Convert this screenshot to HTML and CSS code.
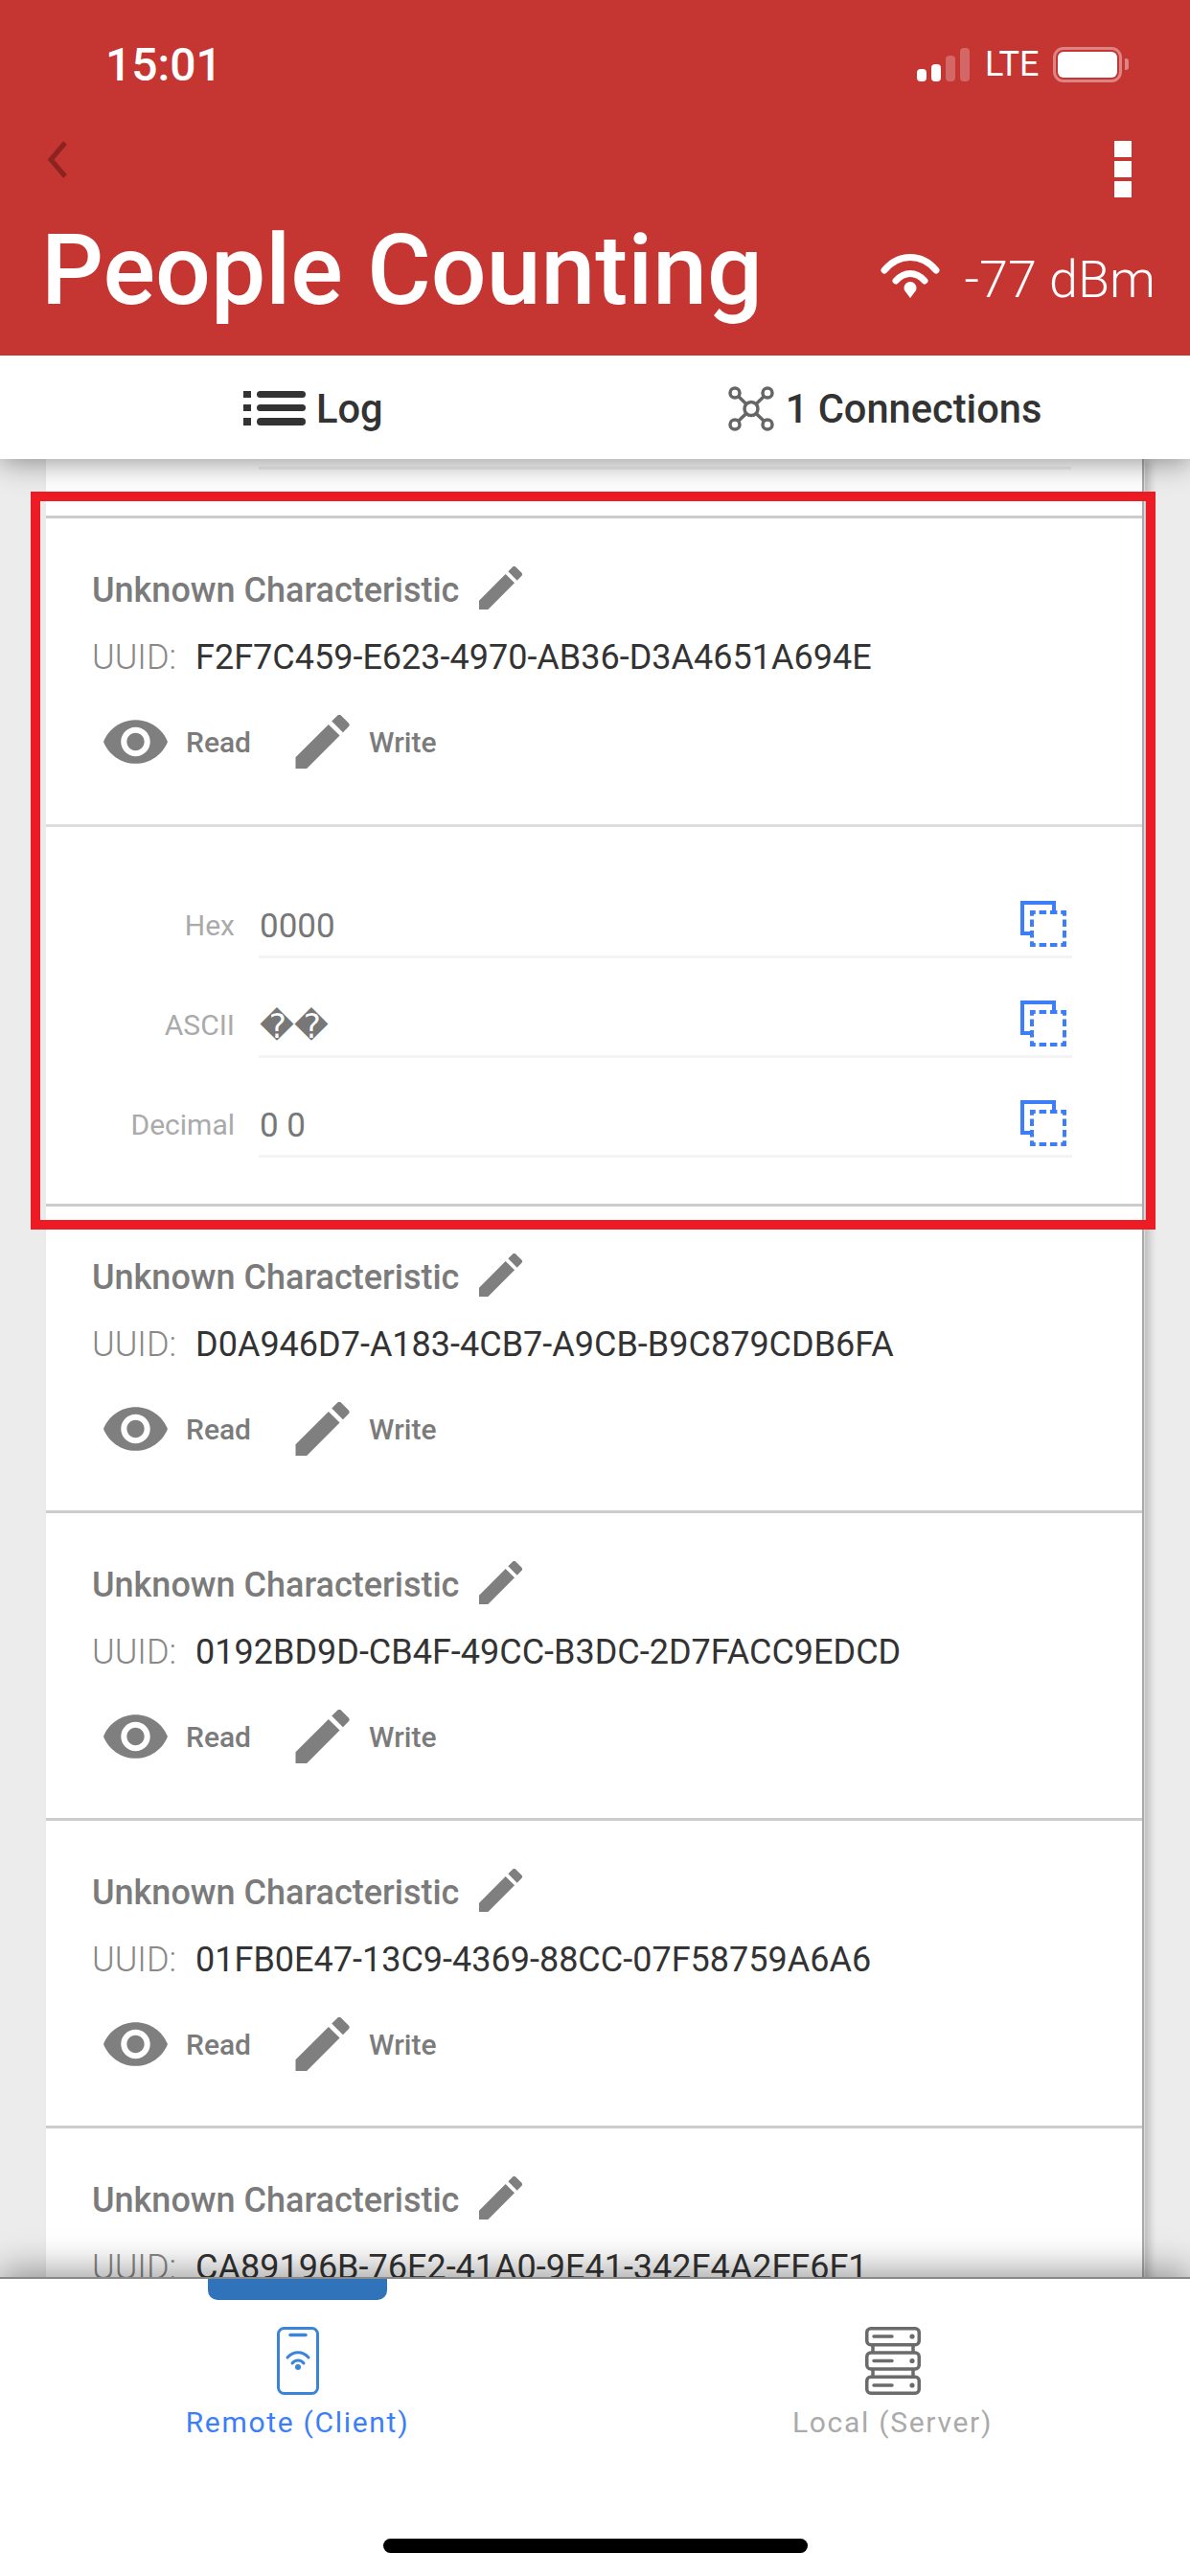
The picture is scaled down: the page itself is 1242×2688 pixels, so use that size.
FILE: index.html
```html
<!DOCTYPE html>
<html lang="en">
<head>
    <meta charset="UTF-8">
    <title>People Counting</title>
    <link rel="stylesheet" href="styles.css">
</head>
<body>
    <svg class="icon-defs" width="0" height="0">
        <defs>
            <symbol id="pencil" viewBox="3 3 18 18">
                <path d="M3 17.25V21h3.75L17.81 9.94l-3.75-3.75L3 17.25zM20.71 7.04a1 1 0 0 0 0-1.41l-2.34-2.34a1 1 0 0 0-1.41 0l-1.83 1.83 3.75 3.75 1.83-1.83z"/>
            </symbol>
            <symbol id="eye" viewBox="1 4.5 22 15">
                <path d="M12 4.5C7 4.5 2.73 7.61 1 12c1.73 4.39 6 7.5 11 7.5s9.27-3.11 11-7.5c-1.73-4.39-6-7.5-11-7.5zM12 17c-2.76 0-5-2.24-5-5s2.24-5 5-5 5 2.24 5 5-2.24 5-5 5zm0-8c-1.66 0-3 1.34-3 3s1.34 3 3 3 3-1.34 3-3-1.34-3-3-3z"/>
            </symbol>
            <symbol id="copy" viewBox="0 0 48 48">
                <path d="M14 34H2V2H35V12" fill="none" stroke="#3b7ef7" stroke-width="4"/>
                <rect x="12" y="12" width="34" height="34" fill="none" stroke="#3b7ef7" stroke-width="4" stroke-dasharray="7.5 3.83" stroke-dashoffset="3.75"/>
            </symbol>
        </defs>
    </svg>

    <header class="app-header">
        <div class="status-bar">
            <span class="status-time">15:01</span>
            <div class="status-right">
                <div class="signal">
                    <i class="bar bar-1"></i>
                    <i class="bar bar-2"></i>
                    <i class="bar bar-3 bar-off"></i>
                    <i class="bar bar-4 bar-off"></i>
                </div>
                <span class="status-lte">LTE</span>
                <div class="battery"><i class="battery-level"></i></div>
                <i class="battery-nub"></i>
            </div>
        </div>
        <div class="toolbar">
            <svg class="back-icon" viewBox="0 0 23 39"><path d="M19 2L4 19.5 19 37" fill="none" stroke="#8c2320" stroke-width="5"/></svg>
            <div class="more-icon"><i></i><i></i><i></i></div>
        </div>
        <div class="title-row">
            <h1 class="page-title">People Counting</h1>
            <div class="rssi">
                <svg class="wifi-icon" viewBox="0 0 62 47">
                    <path d="M4 18C19 0 43 0 58 18M16 29C25 19 37 19 46 29" fill="none" stroke="#fff" stroke-width="7" stroke-linecap="round"/>
                    <path d="M31 47l-6-8a6.5 6.5 0 1 1 12 0z" fill="#fff"/>
                </svg>
                <span class="rssi-value">-77 dBm</span>
            </div>
        </div>
    </header>

    <nav class="top-nav">
        <a class="nav-item nav-log">
            <svg class="log-icon" viewBox="0 0 66 36">
                <rect x="0" y="0" width="8" height="7"/><rect x="0" y="14" width="8" height="7"/><rect x="0" y="28" width="8" height="8"/>
                <rect x="14" y="0" width="51" height="7" rx="3.5"/><rect x="14" y="14" width="51" height="7" rx="3.5"/><rect x="14" y="28" width="51" height="8" rx="4"/>
            </svg>
            Log
        </a>
        <a class="nav-item nav-conn">
            <svg class="conn-icon" viewBox="0 0 48 47">
                <path d="M10 10L38 37M38 10L10 37" stroke="#666" stroke-width="3.5"/>
                <g fill="#fff" stroke="#666" stroke-width="3.5">
                    <circle cx="24" cy="23.5" r="7"/>
                    <circle cx="7" cy="7" r="5"/><circle cx="41" cy="7" r="5"/>
                    <circle cx="7" cy="40" r="5"/><circle cx="41" cy="40" r="5"/>
                </g>
            </svg>
            1 Connections
        </a>
    </nav>

    <main class="content">
        <div class="char-list">
            <div class="prev-stub"><i></i></div>

            <section class="char-card char-open">
                <div class="char-info">
                    <div class="char-title">Unknown Characteristic <svg class="pencil-small"><use href="#pencil"/></svg></div>
                    <div class="char-uuid"><span class="uuid-label">UUID:</span> F2F7C459-E623-4970-AB36-D3A4651A694E</div>
                    <div class="char-actions">
                        <span class="action action-read"><svg class="eye-icon"><use href="#eye"/></svg>Read</span>
                        <span class="action action-write"><svg class="pencil-big"><use href="#pencil"/></svg>Write</span>
                    </div>
                </div>
                <div class="char-values">
                    <div class="value-row">
                        <span class="value-label">Hex</span>
                        <div class="value-field"><span>0000</span><svg class="copy-icon"><use href="#copy"/></svg></div>
                    </div>
                    <div class="value-row">
                        <span class="value-label">ASCII</span>
                        <div class="value-field"><span class="value-ascii">��</span><svg class="copy-icon"><use href="#copy"/></svg></div>
                    </div>
                    <div class="value-row">
                        <span class="value-label">Decimal</span>
                        <div class="value-field"><span>0 0</span><svg class="copy-icon"><use href="#copy"/></svg></div>
                    </div>
                </div>
            </section>

            <section class="char-card">
                <div class="char-info">
                    <div class="char-title">Unknown Characteristic <svg class="pencil-small"><use href="#pencil"/></svg></div>
                    <div class="char-uuid"><span class="uuid-label">UUID:</span> D0A946D7-A183-4CB7-A9CB-B9C879CDB6FA</div>
                    <div class="char-actions">
                        <span class="action action-read"><svg class="eye-icon"><use href="#eye"/></svg>Read</span>
                        <span class="action action-write"><svg class="pencil-big"><use href="#pencil"/></svg>Write</span>
                    </div>
                </div>
            </section>

            <section class="char-card">
                <div class="char-info">
                    <div class="char-title">Unknown Characteristic <svg class="pencil-small"><use href="#pencil"/></svg></div>
                    <div class="char-uuid"><span class="uuid-label">UUID:</span> 0192BD9D-CB4F-49CC-B3DC-2D7FACC9EDCD</div>
                    <div class="char-actions">
                        <span class="action action-read"><svg class="eye-icon"><use href="#eye"/></svg>Read</span>
                        <span class="action action-write"><svg class="pencil-big"><use href="#pencil"/></svg>Write</span>
                    </div>
                </div>
            </section>

            <section class="char-card">
                <div class="char-info">
                    <div class="char-title">Unknown Characteristic <svg class="pencil-small"><use href="#pencil"/></svg></div>
                    <div class="char-uuid"><span class="uuid-label">UUID:</span> 01FB0E47-13C9-4369-88CC-07F58759A6A6</div>
                    <div class="char-actions">
                        <span class="action action-read"><svg class="eye-icon"><use href="#eye"/></svg>Read</span>
                        <span class="action action-write"><svg class="pencil-big"><use href="#pencil"/></svg>Write</span>
                    </div>
                </div>
            </section>

            <section class="char-card">
                <div class="char-info">
                    <div class="char-title">Unknown Characteristic <svg class="pencil-small"><use href="#pencil"/></svg></div>
                    <div class="char-uuid"><span class="uuid-label">UUID:</span> CA89196B-76E2-41A0-9E41-342F4A2FF6F1</div>
                </div>
            </section>
        </div>
        <div class="highlight-box"></div>
    </main>

    <footer class="tab-bar">
        <a class="tab tab-active">
            <i class="tab-indicator"></i>
            <svg class="tab-icon" viewBox="0 0 44 71">
                <rect x="1.5" y="1.5" width="41" height="68" rx="6" fill="none" stroke="#3a85d9" stroke-width="3"/>
                <path d="M14 8.5H30" stroke="#3a85d9" stroke-width="3.5" stroke-linecap="round"/>
                <path d="M11 32C17 25 27 25 33 32M16 38C19 34 25 34 28 38" fill="none" stroke="#3a85d9" stroke-width="3" stroke-linecap="round"/>
                <circle cx="22" cy="42" r="3" fill="#3a85d9"/>
            </svg>
            <span class="tab-label">Remote (Client)</span>
        </a>
        <a class="tab">
            <svg class="tab-icon" viewBox="0 0 58 71">
                <g fill="none" stroke="#6b6b6b" stroke-width="3.5">
                    <rect x="1.75" y="1.75" width="54.5" height="17" rx="4"/>
                    <rect x="1.75" y="27" width="54.5" height="17" rx="4"/>
                    <rect x="1.75" y="52.25" width="54.5" height="17" rx="4"/>
                    <path d="M8 19V27M50 19V27M8 44V52M50 44V52"/>
                    <path d="M9 10H28M9 35.5H28M9 61H28" stroke-linecap="round"/>
                </g>
                <circle cx="49" cy="10" r="2.6" fill="#6b6b6b"/><circle cx="49" cy="35.5" r="2.6" fill="#6b6b6b"/><circle cx="49" cy="61" r="2.6" fill="#6b6b6b"/>
            </svg>
            <span class="tab-label">Local (Server)</span>
        </a>
        <i class="home-bar"></i>
    </footer>
</body>
</html>
```

FILE: styles.css
```css
* {
    box-sizing: border-box;
    margin: 0;
    padding: 0;
}

body {
    width: 1242px;
    height: 2688px;
    overflow: hidden;
    display: flex;
    flex-direction: column;
    font-family: Roboto, "Noto Sans", sans-serif;
    background-color: #ececec;
}

i {
    display: block;
}

.icon-defs {
    position: absolute;
}

/* header */
.app-header {
    height: 371px;
    flex-shrink: 0;
    background-color: #c53532;
    color: white;
    position: relative;
    z-index: 3;
}

.status-bar {
    height: 134px;
    display: flex;
    align-items: center;
    justify-content: space-between;
    padding: 0 64px 0 110px;
}

.status-time {
    font-size: 48px;
    font-weight: 500;
}

.status-right {
    display: flex;
    align-items: center;
}

.signal {
    display: flex;
    align-items: flex-end;
    gap: 5px;
    height: 36px;
}

.bar {
    width: 10px;
    border-radius: 4px;
    background-color: white;
}

.bar-off {
    background-color: rgba(255, 255, 255, 0.25);
}

.bar-1 { height: 13px; }
.bar-2 { height: 18px; }
.bar-3 { height: 27px; }
.bar-4 { height: 35px; }

.status-lte {
    font-size: 36px;
    margin-left: 16px;
    width: 71px;
}

.battery {
    width: 72px;
    height: 37px;
    border: 3px solid rgba(255, 255, 255, 0.4);
    border-radius: 11px;
    padding: 2px;
}

.battery-level {
    height: 100%;
    border-radius: 6px;
    background-color: white;
}

.battery-nub {
    width: 4px;
    height: 12px;
    margin-left: 3px;
    border-radius: 0 3px 3px 0;
    background-color: rgba(255, 255, 255, 0.4);
}

.toolbar {
    height: 78px;
    display: flex;
    justify-content: space-between;
    padding: 13px 61px 0 49px;
}

.back-icon {
    width: 23px;
    height: 39px;
}

.more-icon {
    width: 18px;
    display: flex;
    flex-direction: column;
    gap: 4px;
}

.more-icon i {
    height: 17px;
    background-color: white;
}

.title-row {
    height: 134px;
    display: flex;
    align-items: center;
    justify-content: space-between;
    padding: 6px 36px 0 43px;
}

.page-title {
    font-size: 102px;
    font-weight: 500;
    line-height: 128px;
}

.rssi {
    display: flex;
    align-items: center;
    gap: 25px;
    margin-top: 18px;
}

.wifi-icon {
    width: 62px;
    height: 47px;
    margin-top: -7px;
}

.rssi-value {
    font-size: 54px;
    font-weight: 300;
}

/* log / connections */
.top-nav {
    height: 108px;
    flex-shrink: 0;
    display: flex;
    align-items: center;
    gap: 360px;
    padding: 2px 0 0 254px;
    background-color: white;
    box-shadow: 0 2px 30px rgba(0, 0, 0, 0.45);
    position: relative;
    z-index: 2;
}

.nav-item {
    display: flex;
    align-items: center;
    font-size: 41.6px;
    font-weight: 500;
    color: #333;
}

.log-icon {
    width: 66px;
    height: 36px;
    margin-right: 10px;
    fill: #333;
}

.conn-icon {
    width: 48px;
    height: 47px;
    margin-right: 12px;
}

/* characteristic list */
.content {
    flex: 1;
    min-height: 0;
    overflow: hidden;
    position: relative;
}

.char-list {
    width: 1146px;
    margin-left: 48px;
    background-color: white;
    border-right: 2px solid #a9a9a9;
    box-shadow: 1px 0 1px #ddd, 6px 0 8px rgba(0, 0, 0, 0.2);
}

.prev-stub {
    height: 62px;
    padding: 8px 74px 0 222px;
    border-bottom: 3px solid #ccc;
}

.prev-stub i {
    height: 3px;
    background-color: #f0f0f0;
}

.char-card {
    border-bottom: 3px solid #ccc;
}

.char-open {
    margin-bottom: -1px;
}

.char-info {
    height: 318px;
    padding: 50px 0 0 48px;
}

.char-open .char-info {
    height: 319px;
}

.char-title {
    height: 50px;
    display: flex;
    align-items: center;
    gap: 20px;
    font-size: 36px;
    font-weight: 500;
    color: #7b7b7b;
}

.pencil-small {
    width: 47px;
    height: 45px;
    fill: #7f7f7f;
    margin-top: -6px;
}

.char-uuid {
    margin-top: 25px;
    font-size: 36px;
    line-height: 40px;
    color: #333;
    white-space: nowrap;
}

.uuid-label {
    color: #888;
    font-weight: 300;
    margin-right: 11px;
}

.char-actions {
    margin-top: 40px;
    display: flex;
    height: 56px;
    align-items: center;
    padding-left: 12px;
}

.action {
    display: flex;
    align-items: center;
    font-size: 30px;
    font-weight: 500;
    color: #7b7b7b;
}

.action-write {
    margin-left: 46px;
}

.eye-icon {
    width: 67px;
    height: 46px;
    margin-right: 19px;
    fill: #7f7f7f;
}

.pencil-big {
    width: 57px;
    height: 56px;
    margin-right: 20px;
    fill: #7f7f7f;
}

.char-values {
    border-top: 3px solid #ddd;
    padding: 33px 73px 48px 0;
}

.value-row {
    height: 104px;
    display: flex;
    align-items: flex-end;
}

.value-label {
    width: 197px;
    margin-right: 25px;
    margin-bottom: 13px;
    text-align: right;
    font-size: 30px;
    line-height: 42px;
    color: #aaa;
}

.value-field {
    flex: 1;
    display: flex;
    align-items: flex-end;
    justify-content: space-between;
    padding: 0 6px 9px 1px;
    border-bottom: 3px solid #f4f4f4;
    font-size: 35px;
    line-height: 42px;
    color: #777;
}

.value-ascii {
    font-family: "DejaVu Sans", sans-serif;
}

.copy-icon {
    width: 48px;
    height: 48px;
}

.highlight-box {
    position: absolute;
    left: 32px;
    top: 34px;
    width: 1174px;
    height: 770px;
    border: 10px solid #ed1c24;
}

/* bottom tabs */
.tab-bar {
    height: 312px;
    flex-shrink: 0;
    display: flex;
    background-color: white;
    border-top: 2px solid #8a8a8a;
    box-shadow: 0 -6px 36px rgba(0, 0, 0, 0.4);
    position: relative;
    z-index: 2;
}

.tab {
    width: 50%;
    display: flex;
    flex-direction: column;
    align-items: center;
    padding-top: 50px;
}

.tab-indicator {
    position: absolute;
    top: 0;
    left: 217px;
    width: 187px;
    height: 22px;
    border-radius: 0 0 10px 10px;
    background-color: #3073bb;
}

.tab-icon {
    width: 58px;
    height: 71px;
}

.tab-active .tab-icon {
    width: 44px;
}

.tab-label {
    margin-top: 11px;
    font-size: 30px;
    letter-spacing: 1.7px;
    color: #aaa;
}

.tab-active .tab-label {
    color: #3b7ef7;
}

.home-bar {
    position: absolute;
    left: 400px;
    top: 271px;
    width: 443px;
    height: 15px;
    border-radius: 8px;
    background-color: black;
}
```
